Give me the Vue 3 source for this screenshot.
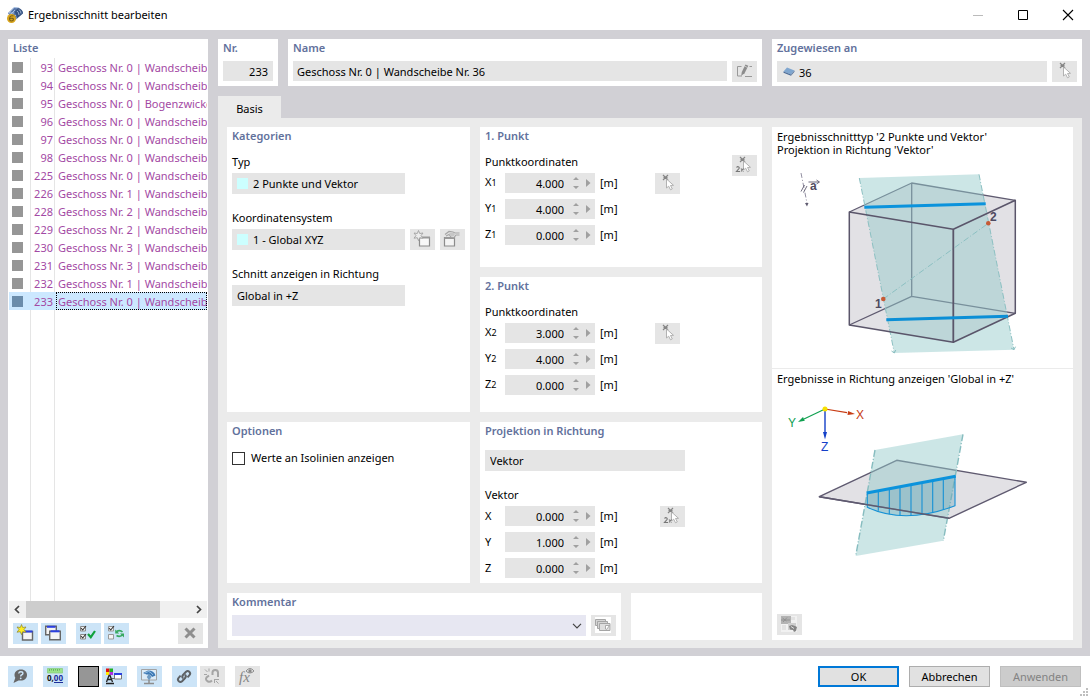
<script setup>
import { ref } from 'vue'

const rows = [
  [93, 'Geschoss Nr. 0 | Wandscheib'],
  [94, 'Geschoss Nr. 0 | Wandscheib'],
  [95, 'Geschoss Nr. 0 | Bogenzwicke'],
  [96, 'Geschoss Nr. 0 | Wandscheib'],
  [97, 'Geschoss Nr. 0 | Wandscheib'],
  [98, 'Geschoss Nr. 0 | Wandscheib'],
  [225, 'Geschoss Nr. 0 | Wandscheib'],
  [226, 'Geschoss Nr. 1 | Wandscheib'],
  [228, 'Geschoss Nr. 2 | Wandscheib'],
  [229, 'Geschoss Nr. 2 | Wandscheib'],
  [230, 'Geschoss Nr. 3 | Wandscheib'],
  [231, 'Geschoss Nr. 3 | Wandscheib'],
  [232, 'Geschoss Nr. 1 | Wandscheib'],
  [233, 'Geschoss Nr. 0 | Wandscheib'],
]
const selected = ref(233)

const groups = [
  {
    id: 'p1', title: '1. Punkt', label: 'Punktkoordinaten', pick: 'pick', extra: true,
    coords: [['X', '1', '4.000'], ['Y', '1', '4.000'], ['Z', '1', '0.000']],
  },
  {
    id: 'p2', title: '2. Punkt', label: 'Punktkoordinaten', pick: 'pick', extra: false,
    coords: [['X', '2', '3.000'], ['Y', '2', '4.000'], ['Z', '2', '0.000']],
  },
  {
    id: 'pv', title: 'Projektion in Richtung', label: 'Vektor', pick: 'pick2', extra: false, mode: 'Vektor',
    coords: [['X', '', '0.000'], ['Y', '', '1.000'], ['Z', '', '0.000']],
  },
]
const ribs = [
  [878.3, 491, 510.7], [889.3, 489, 514.3], [900, 487, 516], [911, 485, 516],
  [922, 483, 515], [932.7, 481, 512.3], [943.3, 479, 509.7],
]
const showValues = ref(false)
</script>

<template>
  <div class="window">
    <svg class="defs" aria-hidden="true">
      <symbol id="i-pick" viewBox="0 0 25 21">
        <path d="M8 2l5 5M13 2l-5 5M8.500 4.500h4" stroke="#858585" stroke-width="1.200" fill="none" />
        <path d="M11.500 6v9l2.200-1.800 1.800 3.600 1.800-.9-1.800-3.400 3-.2z" fill="#fff" stroke="#aaa" stroke-width=".9" />
      </symbol>
      <symbol id="i-pick2" viewBox="0 0 25 21">
        <path d="M8 2l5 5M13 2l-5 5M8.500 4.500h4" stroke="#858585" stroke-width="1.200" fill="none" />
        <path d="M11.500 6v9l2.200-1.800 1.800 3.600 1.800-.9-1.800-3.400 3-.2z" fill="#fff" stroke="#aaa" stroke-width=".9" />
        <path d="M4.500 12.500q1-1.300 2.200-.6 1.200.9-.2 2.300l-2 2.300h3.500M9 13.500l2.500 3M11.500 13.500l-2.500 3" stroke="#777" stroke-width="1.100" fill="none" />
      </symbol>
      <symbol id="i-new" viewBox="0 0 25 21">
        <path d="M9.500 8.500h10v8.500h-10z" fill="#f4f4f4" stroke="#666" stroke-width="1.400" />
        <path d="M10 7.500h9.500v2H10z" fill="#2b3fe0" />
        <path d="M8.500 1.500l1.200 3 3.300-.5-2 2.600 2 2.600-3.300-.5-1.200 3-1.200-3-3.300.5 2-2.600-2-2.600 3.300.5z" fill="#ffee20" stroke="#8a8430" stroke-width=".7" />
      </symbol>
      <symbol id="i-new-off" viewBox="0 0 25 21">
        <path d="M9.500 8.500h10v8.500h-10z" fill="#f8f8f8" stroke="#8c8c8c" stroke-width="1.200" />
        <path d="M9 7.500h11v2H9z" fill="#999" />
        <path d="M8.500 1.500l1.200 3 3.300-.5-2 2.600 2 2.600-3.300-.5-1.200 3-1.200-3-3.300.5 2-2.600-2-2.600 3.300.5z" fill="#ececec" stroke="#a0a0a0" stroke-width=".9" />
      </symbol>
      <symbol id="i-edit-off" viewBox="0 0 25 21">
        <path d="M4.500 8.500h10v8.500h-10z" fill="#f4f4f4" stroke="#8c8c8c" stroke-width="1.200" />
        <path d="M4.500 9h10" stroke="#999" stroke-width="2" />
        <path d="M5 5.500l4-3 4 .5 2 1h4.500M6 7l3-1.500 2 2.500 3 .5 2-2.500h3.500" fill="none" stroke="#a5a5a5" stroke-width="1.200" />
        <path d="M9 4l4-.5 2 1.500-1 2h-3z" fill="#c6c6c6" />
      </symbol>
      <symbol id="i-copy" viewBox="0 0 25 21">
        <path d="M4.700 3.200h10.600v8.600H4.700z" fill="#f4f4f4" stroke="#666" stroke-width="1.400" />
        <path d="M6 3.800h8.500" stroke="#2b3fe0" stroke-width="2" />
        <path d="M8.700 8.200h10.600v8.600H8.700z" fill="#f4f4f4" stroke="#666" stroke-width="1.400" />
        <path d="M9.500 8.300h9" stroke="#2b3fe0" stroke-width="2" />
      </symbol>
      <symbol id="i-checkall" viewBox="0 0 25 21">
        <path d="M4.500 3.500h5v4.500h-5zM4.500 11.500h5V16h-5z" fill="#f4f4f4" stroke="#888" />
        <path d="M5 5l1.700 2L10 3M5 13l1.700 2L10 11" fill="none" stroke="#333" stroke-width="1.100" />
        <path d="M12 11l2.800 3.200L19 8" fill="none" stroke="#10a23b" stroke-width="2.200" />
      </symbol>
      <symbol id="i-checkinv" viewBox="0 0 25 21">
        <path d="M4.500 3.500h5v4.500h-5zM4.500 11.500h5V16h-5z" fill="#f4f4f4" stroke="#999" />
        <path d="M5 5l1.700 2L10 3" fill="none" stroke="#333" stroke-width="1.100" />
        <path d="M12.500 8.500q3.500-2 6 .5M19 11.500q-3 3-6.500 1" fill="none" stroke="#37a960" stroke-width="1.700" />
        <path d="M11.200 6.500v4h4zM20 14.500v-4h-4z" fill="#37a960" />
      </symbol>
      <symbol id="i-delete" viewBox="0 0 25 21">
        <path d="M7.500 5.500l9 9M16.500 5.500l-9 9" stroke="#8e8e8e" stroke-width="3" />
      </symbol>
      <symbol id="i-rename" viewBox="0 0 25 21">
        <path d="M9.500 5.500h-4v9.500H10M13 15.500h7M17.500 5.500H20" fill="none" stroke="#999" />
        <path d="M9.200 14.800l.6-3.800 3.700-7.500 2.800 1.300-3.700 7.500z" fill="#8c8c8c" />
        <path d="M12.500 5l3 1.500" stroke="#ddd" stroke-width=".7" />
      </symbol>
      <symbol id="i-comments" viewBox="0 0 25 21">
        <path d="M4 2h16v16H4z" fill="#fff" />
        <path d="M4.500 4.500h10v6h-10z" fill="#d4d4d4" stroke="#a5a5a5" />
        <path d="M6.500 6.500h10v7h-10z" fill="#d4d4d4" stroke="#a5a5a5" />
        <path d="M8.500 8.500h10.500v7H8.500z" fill="#dedede" stroke="#a5a5a5" />
        <path d="M14.500 14v-3.500h4l-3 4z" fill="#fff" stroke="#999" stroke-width=".8" />
      </symbol>
      <symbol id="i-swap" viewBox="0 0 25 21">
        <path d="M4 2h16v16H4z" fill="#f1f1f1" />
        <path d="M4 2h10v8H4z" fill="#b3b3b3" />
        <path d="M5.500 4l4 3M10 3.500L6 8M4 6h9" stroke="#8f8f8f" stroke-width=".9" />
        <path d="M11 9h8v7h-8z" fill="#cfcfcf" />
        <path d="M14 3h4v3h-4zM5 11h4v5H5z" fill="#e2e2e2" />
        <path d="M12 12l3-1 3 1 2 1-1 4-2 1-1-2-3-.5z" fill="#858585" />
        <path d="M14 12.500l3 2" stroke="#ddd" />
      </symbol>
      <symbol id="i-help" viewBox="0 0 25 21">
        <path d="M13 3.500c-4.200 0-6.500 2.500-6.500 5.500 0 1.200.2 2 .8 2.800L5.500 17l5-2.600c5 1 8.500-1.600 8.500-5.400 0-3-2-5.500-6-5.500z" fill="#666" />
        <path d="M10.700 7.500q.2-1.800 2.200-1.800 2 0 2 1.700 0 1-1.500 1.600-.7.300-.7 1.500" fill="none" stroke="#cce4f7" stroke-width="1.400" />
        <circle cx="12.700" cy="12.300" r=".9" fill="#cce4f7" />
      </symbol>
      <symbol id="i-units" viewBox="0 0 25 21">
        <path d="M4.500 2.500h15v4.500h-15z" fill="#9be38a" stroke="#84cc7a" stroke-width=".7" />
        <path d="M6.500 3v2M8.500 3v1.500M10.500 3v2M12.500 3v1.500M14.500 3v2M16.500 3v1.500" stroke="#5cab58" stroke-width=".8" />
        <path d="M11 16.500h9" stroke="#1d2f9a" />
      </symbol>
      <symbol id="i-display" viewBox="0 0 25 21">
        <path d="M4 2.500h3.500V6H4z" fill="#e01010" /><path d="M7.500 2.500H11V6H7.500z" fill="#20b020" />
        <path d="M4 6h3.500v3H4z" fill="#ffe800" /><path d="M7.500 6H11v3H7.500z" fill="#b030e0" />
        <path d="M4.500 16L7 9.500h1l2.500 6.500M6 13.500h3.500M4 17.500h8" fill="none" stroke="#222" stroke-width="1.300" />
        <path d="M12.500 7.500h7v5.500h-7z" fill="#fff" stroke="#777" /><path d="M12 8h8" stroke="#2b3fe0" stroke-width="2" />
        <path d="M10 12.500h2.500" stroke="#666" />
      </symbol>
      <symbol id="i-monitor" viewBox="0 0 25 21">
        <path d="M4.500 3.500h15V14h-15z" fill="#dcebf7" stroke="#a2a2a2" />
        <path d="M12 14v3M7 17.500h10" stroke="#8d8d8d" stroke-width="1.500" />
        <path d="M6 7l5-2.500q6 0 7.500 5L15 11Q14 8 9.500 8.500z" fill="#3d79b5" />
        <path d="M8 7l3.500-1.500Q14 6 16 9" fill="none" stroke="#a7cce9" stroke-width=".8" />
        <path d="M12 7.500l2.500 3.500L12 14.500 9.800 11z" fill="#6e9ac2" />
      </symbol>
      <symbol id="i-link" viewBox="0 0 25 21">
        <g fill="none" stroke="#5e6266" stroke-width="2">
          <path d="M11 12.200q-1.500-1.500 0-3.200l3-3.200q1.700-1.500 3.300 0 1.700 1.700.2 3.300l-2 2.200" />
          <path d="M13 8.700q1.600 1.500.1 3.300l-3 3.200q-1.700 1.500-3.300 0-1.700-1.700-.2-3.300l2-2.200" />
        </g>
      </symbol>
      <symbol id="i-unlink" viewBox="0 0 25 21">
        <g fill="none" stroke="#a5a5a5" stroke-width="2">
          <path d="M12.500 9V6.500q0-2.500 2.700-2.500T18 6.500V11" />
          <path d="M12 14.500q-2 2-4 1-3-1.500-1.500-4L9 9.500" />
        </g>
        <path d="M5 3.500L7.500 6M9 2.500v3M4 8.500h3M14 13.500h5M14.500 13v4M16 15l2.500 2.500" stroke="#a5a5a5" fill="none" />
      </symbol>
      <symbol id="i-eye" viewBox="0 0 25 21">
        <path d="M11 5q4-5 8 0-4 4-8 0z" fill="#e8e8e8" stroke="#8d8d8d" /><circle cx="15" cy="5" r="1.700" fill="#888" />
      </symbol>
    </svg>

    <header class="titlebar">
      <svg class="appicon" viewBox="0 0 18 18" aria-hidden="true">
        <path d="M2 7l6-5.500 5 .5 4 4.500-7 7-4 1z" fill="#5877aa" />
        <path d="M8 1.500l5 .5-5 5-5 0zM4 9l5-5M7 12l6-6M10 12.500l5-5" fill="none" stroke="#a9c0e2" />
        <path d="M12 2q5 1 5 5.500l-6 5q-.5-5-3-6z" fill="#365382" />
        <path d="M13 3.500q2 1.500 2 4M11 5q2 1.500 2 4" fill="none" stroke="#b7cae5" stroke-width=".8" />
        <circle cx="5.500" cy="12.500" r="4.500" fill="#d9a51d" />
        <path d="M7.500 10q-3.500-1-4 2.500 0 2.500 2 2.500t2-1.700q0-1.500-3.700-.8" fill="none" stroke="#7a6118" stroke-width="1.100" />
      </svg>
      <h1>Ergebnisschnitt bearbeiten</h1>
      <div class="winbtns">
        <button type="button" aria-label="Minimieren" disabled><svg viewBox="0 0 12 12"><path d="M1 6.500h10" stroke="#bbb" /></svg></button>
        <button type="button" aria-label="Maximieren"><svg viewBox="0 0 12 12"><path d="M1.500 1.500h9v9h-9z" fill="none" stroke="#000" /></svg></button>
        <button type="button" aria-label="Schließen"><svg viewBox="0 0 12 12"><path d="M1 1l10 10M11 1L1 11" fill="none" stroke="#000" stroke-width="1.100" /></svg></button>
      </div>
    </header>

    <main class="main">
      <section class="panel list">
        <h2>Liste</h2>
        <div class="listbody">
          <table>
            <tbody>
              <tr v-for="r in rows" :key="r[0]" :class="{ sel: r[0] === selected }" @click="selected = r[0]">
                <td class="c-sw"><span class="sw"></span></td>
                <td class="c-no">{{ r[0] }}</td>
                <td class="c-name"><div>{{ r[1] }}</div></td>
              </tr>
            </tbody>
          </table>
        </div>
        <div class="scroll">
          <button type="button" aria-label="Nach links"><svg viewBox="0 0 17 17"><path d="M10 5L6.500 8.500 10 12" fill="none" stroke="#444" stroke-width="1.700" /></svg></button>
          <div class="track"><div class="thumb"></div></div>
          <button type="button" aria-label="Nach rechts"><svg viewBox="0 0 17 17"><path d="M7 5l3.500 3.500L7 12" fill="none" stroke="#444" stroke-width="1.700" /></svg></button>
        </div>
        <div class="listtools">
          <button class="ib blue" type="button" aria-label="Neu"><svg><use href="#i-new" /></svg></button>
          <button class="ib blue" type="button" aria-label="Kopieren"><svg><use href="#i-copy" /></svg></button>
          <button class="ib blue gap" type="button" aria-label="Alle auswählen"><svg><use href="#i-checkall" /></svg></button>
          <button class="ib blue" type="button" aria-label="Auswahl umkehren"><svg><use href="#i-checkinv" /></svg></button>
          <button class="ib end" type="button" aria-label="Löschen" disabled><svg><use href="#i-delete" /></svg></button>
        </div>
      </section>

      <div class="content">
        <div class="head">
          <section class="panel">
            <h2><label for="nr">Nr.</label></h2>
            <div class="row"><input id="nr" class="field num" value="233" readonly></div>
          </section>
          <section class="panel">
            <h2><label for="name">Name</label></h2>
            <div class="row">
              <input id="name" class="field grow" value="Geschoss Nr. 0 | Wandscheibe Nr. 36" readonly>
              <button class="ib" type="button" aria-label="Name bearbeiten" disabled><svg><use href="#i-rename" /></svg></button>
            </div>
          </section>
          <section class="panel">
            <h2><label for="assigned">Zugewiesen an</label></h2>
            <div class="row">
              <div class="combo grow assigned">
                <svg viewBox="0 0 12 9" aria-hidden="true"><path d="M.5 4.500L4 .5l7.500 3L8 7.500z" fill="#7fa6cf" /><path d="M.5 4.500L8 7.500v1.300L.5 5.700z" fill="#4a6a96" /><path d="M8 7.500l3.500-4v1.200L8 8.800z" fill="#58749b" /></svg>
                <input id="assigned" value="36" readonly>
              </div>
              <button class="ib" type="button" aria-label="Objekt wählen" disabled><svg><use href="#i-pick" /></svg></button>
            </div>
          </section>
        </div>

        <div class="tabs"><button type="button" role="tab" aria-selected="true">Basis</button></div>

        <div class="body">
          <section class="panel kat">
            <h2>Kategorien</h2>
            <div class="stack">
              <label for="typ">Typ</label>
              <div class="row"><div class="combo w173"><span class="cy"></span><select id="typ" disabled><option>2 Punkte und Vektor</option></select></div></div>
              <label for="ks">Koordinatensystem</label>
              <div class="row">
                <div class="combo w173"><span class="cy"></span><select id="ks" disabled><option>1 - Global XYZ</option></select></div>
                <button class="ib" type="button" aria-label="Neues Koordinatensystem" disabled><svg><use href="#i-new-off" /></svg></button>
                <button class="ib" type="button" aria-label="Koordinatensystem bearbeiten" disabled><svg><use href="#i-edit-off" /></svg></button>
              </div>
              <label for="dir">Schnitt anzeigen in Richtung</label>
              <div class="row"><div class="combo w173"><select id="dir" disabled><option>Global in +Z</option></select></div></div>
            </div>
          </section>

          <section v-for="g in groups" :key="g.id" class="panel" :class="g.id">
            <h2>{{ g.title }}</h2>
            <div v-if="g.mode" class="mode">
              <div class="combo w200"><select :aria-label="g.title" disabled><option>{{ g.mode }}</option></select></div>
            </div>
            <div class="point">
              <div class="coords">
                <div class="caption">{{ g.label }}</div>
                <div v-for="c in g.coords" :key="c[0]" class="coord">
                  <label :for="g.id + c[0]">{{ c[0] }}<small v-if="c[1]">{{ c[1] }}</small></label>
                  <div class="spin">
                    <input :id="g.id + c[0]" :value="c[2]" readonly>
                    <svg viewBox="0 0 20 20" aria-hidden="true"><path d="M1 7l3-3 3 3zM1 13l3 3 3-3zM14 6l4.500 4-4.500 4z" fill="#a0a0a0" /></svg>
                  </div>
                  <span>[m]</span>
                </div>
              </div>
              <button class="ib pick" type="button" aria-label="Punkt wählen" disabled><svg><use :href="'#i-' + g.pick" /></svg></button>
              <button v-if="g.extra" class="ib both" type="button" aria-label="Zwei Punkte wählen" disabled><svg><use href="#i-pick2" /></svg></button>
            </div>
          </section>

          <section class="panel opt">
            <h2>Optionen</h2>
            <label class="check"><input v-model="showValues" type="checkbox"><span>Werte an Isolinien anzeigen</span></label>
          </section>

          <div class="foot">
            <section class="panel grow">
              <h2><label for="kom">Kommentar</label></h2>
              <div class="row">
                <div class="combo grow lilac">
                  <select id="kom"><option></option></select>
                  <svg viewBox="0 0 10 6" aria-hidden="true"><path d="M1 .8l4 4 4-4" fill="none" stroke="#444" stroke-width="1.200" /></svg>
                </div>
                <button class="ib" type="button" aria-label="Kommentare" disabled><svg><use href="#i-comments" /></svg></button>
              </div>
            </section>
            <section class="panel blank"></section>
          </div>

          <section class="panel view">
            <div class="pic1">
              <p>Ergebnisschnitttyp '2 Punkte und Vektor'<br>Projektion in Richtung 'Vektor'</p>
              <svg viewBox="772 156 301 208" role="img" aria-label="Schnittebene durch einen Quader">
                <path d="M849.300 212L911.700 183l103.600 17.300v113L953.300 342.300 849.300 325z" fill="#e2e1e5" />
                <g fill="none" stroke="#5f5a70" stroke-width="1.300" stroke-linejoin="round">
                  <path d="M849.300 212L911.700 183l103.600 17.300M911.700 183v113.300L849.300 325M911.700 296.300l103.600 17" />
                </g>
                <path d="M859.300 178L979 174.300l35 175.400L894.300 353z" fill="#94cbcb" fill-opacity=".48" />
                <g fill="none" stroke="#8cc0c2" stroke-dasharray="6 2 1 2">
                  <path d="M859.300 178l35 175M979 174.300l35 175.400M883.300 299l105-75.700" />
                  <path d="M891.500 351l2.800 2 1.500-3M1011 348l3 1.700 1.500-3" stroke-dasharray="none" />
                </g>
                <path d="M864.300 207.300L985.700 203.700" stroke="#0b93dc" stroke-width="3" />
                <g fill="none" stroke="#5a556a" stroke-width="1.700" stroke-linejoin="round">
                  <path d="M849.300 212l104 17.300 62-29v113l-62 29-104-17.300z" stroke-width="1.500" />
                  <path d="M953.300 229.300v113" stroke-width="1.800" />
                </g>
                <path d="M886.300 319.700L1008 316.300" stroke="#0b8fd6" stroke-width="3" />
                <circle cx="883.300" cy="299" r="2.300" fill="#c65a35" /><circle cx="988.300" cy="223.300" r="2.300" fill="#c65a35" />
                <g fill="#4f4a60" font-family="Liberation Sans, sans-serif" font-weight="bold" font-size="12">
                  <text x="875" y="308">1</text><text x="990" y="221">2</text><text x="810" y="190">a</text>
                </g>
                <path d="M801 173l6 30" fill="none" stroke="#77738a" stroke-width=".8" stroke-dasharray="5 2 1 2" />
                <path d="M807 206.500l-2-3.500h3.500z" fill="#5f5b70" />
                <path d="M801 191.500l3.500-6.500M803.500 192.500l3.500-6.500M808.500 182h10.500M816.500 180l3 2-3 2" fill="none" stroke="#5f5b70" stroke-width=".9" />
              </svg>
            </div>
            <div class="pic2">
              <p>Ergebnisse in Richtung anzeigen 'Global in +Z'</p>
              <svg viewBox="772 389 301 181" role="img" aria-label="Ergebnisverlauf in Richtung Z">
                <path d="M825 409l22 3.600" stroke="#c83c14" stroke-width="1.200" /><path d="M855 414l-7.500 1 .6-4z" fill="#c83c14" />
                <path d="M825 409l-21 10" stroke="#10a050" stroke-width="1.200" /><path d="M798 422l5-5 1.800 3.700z" fill="#10a050" />
                <path d="M825 409v24" stroke="#1440c8" stroke-width="1.400" /><path d="M825 439.500l-2-7.500h4z" fill="#1440c8" />
                <circle cx="825" cy="409" r="2.500" fill="#f7e000" />
                <g font-family="Liberation Sans, sans-serif" font-size="12">
                  <text x="856" y="419" fill="#c83c14">X</text><text x="788" y="427" fill="#10a050">Y</text><text x="821" y="451" fill="#1440c8">Z</text>
                </g>
                <path d="M819.300 496.700L896.700 460.300l129.600 22L949 518.300z" fill="#e2e1e5" stroke="#5f5a70" stroke-width="1.400" stroke-linejoin="round" />
                <path d="M875 450l88-15.700-19.700 106.400L855.700 556z" fill="#94cbcb" fill-opacity=".48" />
                <path d="M875 450L855.700 556M963 434.300L943.300 540.700" stroke="#86bcbf" stroke-width="1.400" stroke-dasharray="7 2 1 2" />
                <path d="M867.300 493L955 476.700v29Q905 525 867.300 507.300z" fill="#5f9fb5" fill-opacity=".35" stroke="#1591d5" stroke-width="1.100" />
                <path v-for="r in ribs" :key="r[0]" :d="`M${r[0]} ${r[1]}V${r[2]}`" stroke="#1591d5" stroke-width="1.100" />
                <path d="M819.300 496.700L949 518.300" stroke="#5f5a70" stroke-width="1.400" />
                <path d="M866.700 493L955.700 476.300" stroke="#0b93dc" stroke-width="3" />
              </svg>
              <button class="ib" type="button" aria-label="Ansicht wechseln" disabled><svg><use href="#i-swap" /></svg></button>
            </div>
          </section>
        </div>
      </div>
    </main>

    <footer class="bottom">
      <button class="ib blue" type="button" aria-label="Hilfe"><svg><use href="#i-help" /></svg></button>
      <button class="ib blue gap" type="button" aria-label="Einheiten">
        <svg><use href="#i-units" /><text x="4" y="15" font-size="8" font-weight="bold" fill="#111">0,<tspan fill="#1d2f9a">00</tspan></text></svg>
      </button>
      <button class="colour gap" type="button" aria-label="Farbe"></button>
      <button class="ib blue" type="button" aria-label="Anzeige"><svg><use href="#i-display" /></svg></button>
      <button class="ib blue gap" type="button" aria-label="Ansicht"><svg><use href="#i-monitor" /></svg></button>
      <button class="ib blue gap" type="button" aria-label="Verknüpfen"><svg><use href="#i-link" /></svg></button>
      <button class="ib" type="button" aria-label="Trennen" disabled><svg><use href="#i-unlink" /></svg></button>
      <button class="ib gap" type="button" aria-label="Formel" disabled>
        <svg><text x="4" y="16" class="fx">fx</text><use href="#i-eye" /></svg>
      </button>
      <div class="actions">
        <button class="ok" type="button">OK</button>
        <button type="button">Abbrechen</button>
        <button type="button" disabled>Anwenden</button>
      </div>
      <svg class="grip" viewBox="0 0 8 8" aria-hidden="true"><path d="M6 0h2v2H6zM3 3h2v2H3zM6 3h2v2H6zM0 6h2v2H0zM3 6h2v2H3zM6 6h2v2H6z" fill="#bfbfbf" /></svg>
    </footer>
  </div>
</template>

<style>
body { margin: 0; background: #fff; }
</style>

<style scoped>
.window, .window * { box-sizing: border-box; }
.window {
  min-height: 100vh;
  display: flex;
  flex-direction: column;
  font: 11px/16px "Noto Sans", "Open Sans", sans-serif;
  color: #000;
  background: #fff;
}
.defs { display: none; }
button, input, select { font: inherit; color: inherit; margin: 0; padding: 0; border: 0; border-radius: 0; background: none; min-width: 0; outline: none; }
svg { display: block; }
h1, h2, p { margin: 0; }
h2 { font-size: 11px; line-height: 18px; font-weight: 600; color: #62719c; padding: 0 5px; }

.titlebar { height: 30px; display: flex; align-items: center; padding-left: 6px; }
.appicon { width: 18px; height: 18px; }
h1 { flex: 1; font-size: 11px; line-height: 18px; font-weight: 400; margin-left: 4px; }
.winbtns { display: flex; }
.winbtns button { width: 45px; height: 30px; display: grid; place-items: center; }
.winbtns svg { width: 12px; height: 12px; }

.main { flex: 1; background: #d1d0d5; display: flex; gap: 10px; padding: 9px 8px 8px; }
.panel { background: #fff; min-width: 0; }
.list { width: 200px; display: flex; flex-direction: column; padding-bottom: 4px; }
.listbody {
  flex: 1;
  margin: 1px 1px 0;
  overflow: hidden;
  background: linear-gradient(#e5e5e5, #e5e5e5) 21px 0 / 1px 100% no-repeat, linear-gradient(#e5e5e5, #e5e5e5) 45px 0 / 1px 100% no-repeat;
}
table { border-collapse: collapse; table-layout: fixed; width: 100%; color: #a349a4; }
tr { height: 18px; }
td { padding: 0; line-height: 16px; }
.c-sw { width: 22px; }
.sw { display: block; width: 11px; height: 11px; margin: 0 0 0 3px; }
.sw { background: #969696; }
.c-no { width: 24px; text-align: right; padding: 2px 2px 0 0; }
.c-name { padding-left: 1px; }
.c-name div { white-space: nowrap; overflow: hidden; height: 18px; line-height: 18px; padding: 1px 0 0 2px; }
.sel { background: #cce8ff; }
.sel .sw { background: #6a8cab; }
.sel .c-name div { outline: 1px dotted #000; outline-offset: -1px; }
.scroll { height: 17px; margin: 0 1px 5px; display: flex; background: #f0f0f0; }
.scroll button, .scroll svg { width: 17px; height: 17px; }
.track { flex: 1; }
.thumb { width: 82%; height: 17px; background: #cdcdcd; }
.listtools { display: flex; gap: 3px; padding: 0 5px; }
.ib { flex: none; width: 25px; height: 21px; background: #e5e5e5; }
.ib svg { width: 25px; height: 21px; }
.blue { background: #cce4f7; }
.gap { margin-left: 7px; }
.end { margin-left: auto; }

.content { flex: 1; min-width: 0; display: flex; flex-direction: column; }
.head { display: grid; grid-template-columns: 60px 1fr 310px; gap: 10px; }
.row { display: flex; gap: 5px; padding: 0 5px; }
.head .row { padding-top: 4px; padding-bottom: 4px; }
.grow { flex: 1; }
.field { height: 20px; width: 100%; background: #e5e5e5; padding: 1px 4px 0; }
.num { text-align: right; padding-right: 5px; }
.combo { height: 21px; display: flex; align-items: center; background: #e5e5e5; padding-left: 5px; }
.combo select, .combo input { flex: 1; height: 21px; padding-top: 1px; appearance: none; opacity: 1; color: #000; }
.assigned svg { width: 12px; height: 9px; margin: 0 4px 0 1px; }
.cy { width: 11px; height: 11px; background: #cff; margin-right: 5px; }
.w173 { width: 173px; }
.w200 { width: 200px; }

.tabs { margin-top: 10px; }
.tabs button { width: 63px; height: 22px; background: #ebebeb; display: block; padding-top: 3px; }
.body {
  flex: 1;
  background: #ebebeb;
  padding: 9px 9px 8px;
  display: grid;
  gap: 10px;
  grid-template-columns: 243px minmax(0, 1fr) 301px;
  grid-template-rows: 140fr 135fr 161fr auto;
  grid-template-areas: "kat p1 view" "kat p2 view" "opt pv view" "foot foot view";
}
.kat { grid-area: kat; }
.p1 { grid-area: p1; }
.p2 { grid-area: p2; }
.pv { grid-area: pv; }
.opt { grid-area: opt; }
.foot { grid-area: foot; display: flex; gap: 10px; }
.view { grid-area: view; display: flex; flex-direction: column; }

.stack { padding-top: 9px; }
.stack label { display: block; padding: 0 5px; margin-bottom: 3px; }
.stack .row { margin-bottom: 16px; }

.point { display: flex; padding: 9px 5px 0; }
.coords { width: 170px; }
.caption { margin-bottom: 3px; }
.coord { display: flex; align-items: center; height: 20px; margin-bottom: 6px; }
.coord label { width: 20px; display: flex; align-items: baseline; }
.coord small { font-size: 9px; line-height: 18px; }
.spin { width: 90px; height: 20px; display: flex; background: #e5e5e5; margin-right: 5px; }
.spin input { flex: 1; text-align: right; padding: 2px 8px 0 0; }
.spin svg { width: 20px; height: 20px; margin-right: 3px; }
.pick { margin-top: 19px; }
.both { margin: 1px 0 0 auto; }
.mode { padding: 10px 5px 0; }
.pv .point { padding-top: 16px; }
.pv .coords { width: 175px; }
.pv .coord:last-child { margin-bottom: 5px; }

.check { display: flex; align-items: center; gap: 6px; padding: 10px 5px 0; }
.check input { appearance: none; width: 13px; height: 13px; border: 1px solid #333; background: #fff; }
.check input:checked { background: #333; }

.foot .row { padding-top: 4px; padding-bottom: 4px; }
.lilac { background: #e7e7f2; padding-right: 4px; }
.lilac svg { width: 10px; height: 6px; }
.blank { width: 131px; }

.view p { line-height: 13px; padding: 0 5px; }
.pic1 { padding: 3px 0 4px; border-bottom: 1px solid #ebebeb; }
.pic1 svg { width: 100%; height: 208px; }
.pic2 { flex: 1; padding: 3px 0 5px; display: flex; flex-direction: column; }
.pic2 > svg { width: 100%; height: 181px; margin-top: 4px; }
.pic2 .ib { margin: auto 5px 0; }

.bottom { height: 41px; display: flex; gap: 3px; align-items: center; padding: 0 2px 0 8px; }
.bottom .gap { margin-left: 7px; }
.colour { width: 21px; height: 21px; background: #969696; border: 1px solid #000; }
.fx { font: italic 15px "Liberation Serif", serif; fill: #858585; }
.actions { margin-left: auto; display: flex; gap: 10px; }
.actions button { width: 81px; height: 21px; background: #e1e1e1; border: 1px solid #adadad; padding-top: 1px; }
.actions .ok { border: 2px solid #0078d7; }
.actions button:disabled { background: #ccc; border-color: #bfbfbf; color: #838383; }
.grip { width: 8px; height: 8px; align-self: flex-end; margin: 0 0 1px -4px; }
</style>
